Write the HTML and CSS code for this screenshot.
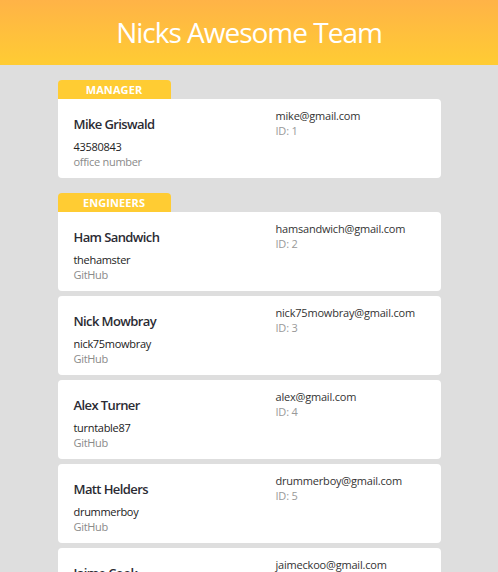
FILE: index.html
```html
<!DOCTYPE html>
<html>
<head>
<meta charset="utf-8">
<link rel="stylesheet" href="styles.css">
</head>
<body>
<header class="top">
  <h1 class="title">Nicks Awesome Team</h1>
</header>
<main class="team">
  <section class="group">
    <div class="tab">Manager</div>
    <div class="cards">
      <div class="card">
        <div class="left">
          <div class="name">Mike Griswald</div>
          <div class="value">43580843</div>
          <div class="label">office number</div>
        </div>
        <div class="right">
          <div class="email">mike@gmail.com</div>
          <div class="id">ID: 1</div>
        </div>
      </div>
    </div>
  </section>
  <section class="group">
    <div class="tab">Engineers</div>
    <div class="cards">
      <div class="card">
        <div class="left">
          <div class="name">Ham Sandwich</div>
          <div class="value">thehamster</div>
          <div class="label">GitHub</div>
        </div>
        <div class="right">
          <div class="email">hamsandwich@gmail.com</div>
          <div class="id">ID: 2</div>
        </div>
      </div>
      <div class="card">
        <div class="left">
          <div class="name">Nick Mowbray</div>
          <div class="value">nick75mowbray</div>
          <div class="label">GitHub</div>
        </div>
        <div class="right">
          <div class="email">nick75mowbray@gmail.com</div>
          <div class="id">ID: 3</div>
        </div>
      </div>
      <div class="card">
        <div class="left">
          <div class="name">Alex Turner</div>
          <div class="value">turntable87</div>
          <div class="label">GitHub</div>
        </div>
        <div class="right">
          <div class="email">alex@gmail.com</div>
          <div class="id">ID: 4</div>
        </div>
      </div>
      <div class="card">
        <div class="left">
          <div class="name">Matt Helders</div>
          <div class="value">drummerboy</div>
          <div class="label">GitHub</div>
        </div>
        <div class="right">
          <div class="email">drummerboy@gmail.com</div>
          <div class="id">ID: 5</div>
        </div>
      </div>
      <div class="card">
        <div class="left">
          <div class="name">Jaime Cook</div>
          <div class="value">jaimeckoo</div>
          <div class="label">GitHub</div>
        </div>
        <div class="right">
          <div class="email">jaimeckoo@gmail.com</div>
          <div class="id">ID: 6</div>
        </div>
      </div>
    </div>
  </section>
</main>
</body>
</html>
```
FILE: styles.css
```css
html, body {
  margin: 0;
  padding: 0;
}
body {
  background: #dedede;
  font-family: "Open Sans", "Liberation Sans", sans-serif;
  color: #222;
}
.top {
  height: 65px;
  background: linear-gradient(to bottom, #ffb347, #ffcc33);
  display: flex;
  align-items: center;
  justify-content: center;
}
.title {
  margin: 0;
  color: #fff;
  font-size: 28px;
  font-weight: 400;
  letter-spacing: -1px;
  line-height: 1;
  padding-bottom: 2px;
}
.team {
  width: 383px;
  margin: 0 auto;
  padding-top: 15px;
  display: flex;
  flex-direction: column;
  gap: 15px;
}
.tab {
  width: 113px;
  height: 19px;
  box-sizing: border-box;
  background: #ffcc33;
  color: #fff;
  border-radius: 4px 4px 0 0;
  text-transform: uppercase;
  font-weight: 700;
  font-size: 11px;
  letter-spacing: 0.1px;
  line-height: 19px;
  text-align: center;
}
.cards {
  display: flex;
  flex-direction: column;
  gap: 5px;
}
.card {
  background: #fff;
  border-radius: 4px;
  height: 79px;
  box-sizing: border-box;
  padding: 9px 16px 0;
  display: grid;
  grid-template-columns: 202px 1fr;
}
.card:first-child {
  border-top-left-radius: 0;
}
.left {
  padding-top: 7px;
}
.name {
  font-size: 13px;
  font-weight: 600;
  letter-spacing: -0.6px;
  line-height: 18px;
  color: #2b2b33;
  margin-bottom: 6px;
}
.value, .label {
  font-size: 11px;
  letter-spacing: -0.3px;
  line-height: 15px;
}
.value {
  color: #222;
}
.label {
  color: #8a8a8a;
}
.email, .id {
  font-size: 11px;
  letter-spacing: -0.2px;
  line-height: 15px;
}
.email {
  color: #333;
}
.id {
  color: #999;
}
```
